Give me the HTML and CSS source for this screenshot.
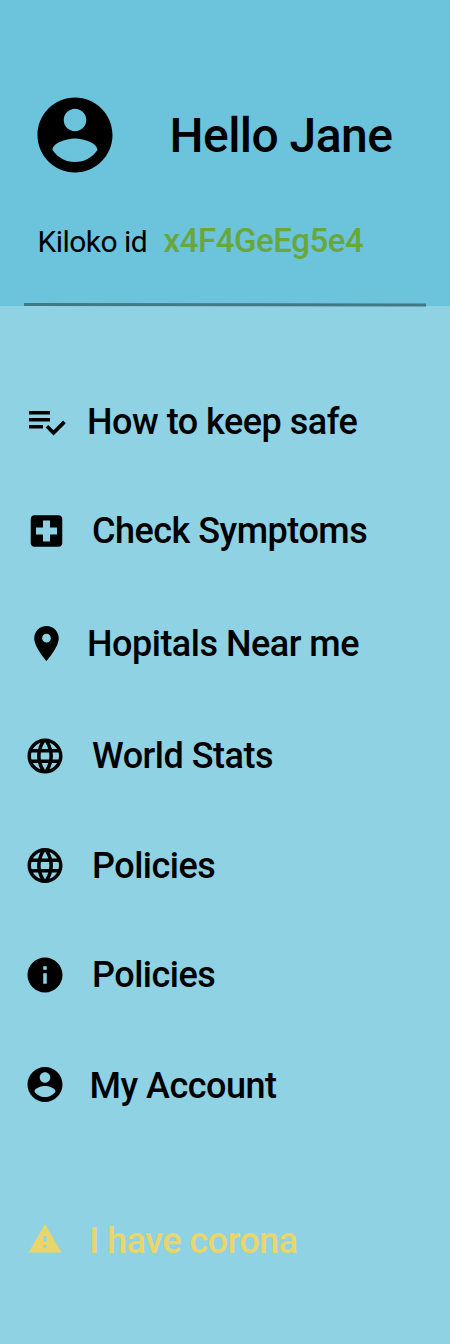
FILE: index.html
```html
<!DOCTYPE html>
<html lang="en">
<head>
<meta charset="utf-8">
<title>Menu</title>
<link rel="stylesheet" href="styles.css">
</head>
<body>
<aside class="drawer">
  <header class="profile">
    <div class="greeting">
      <svg class="avatar" viewBox="1.870 1.870 20.260 20.260"><path d="M12 2C6.480 2 2 6.480 2 12s4.480 10 10 10 10-4.480 10-10S17.520 2 12 2zm0 3c1.660 0 3 1.340 3 3s-1.340 3-3 3-3-1.340-3-3 1.340-3 3-3zm0 14.200c-2.500 0-4.710-1.280-6-3.220.030-1.990 4-3.080 6-3.080 1.990 0 5.970 1.090 6 3.080-1.290 1.940-3.500 3.220-6 3.220z"/></svg>
      <h1 class="name">Hello Jane</h1>
    </div>
    <p class="identity"><span class="label">Kiloko id</span><span class="code">x4F4GeEg5e4</span></p>
    <svg class="divider" viewBox="0 0 402 4"><path d="M0 1.500L402 2.100" stroke="#407886" stroke-width="3"/></svg>
  </header>
  <nav class="menu">
    <a class="item safe"><svg class="icon" viewBox="0.286 0.286 24 24"><path d="M14 10H2v2h12v-2zm0-4H2v2h12V6zM2 16h8v-2H2v2zm19.500-4.500L23 13l-6.990 7-4.510-4.500L13 14l3.010 3 5.490-5.500z"/></svg><span class="text">How to keep safe</span></a>
    <a class="item symptoms"><svg class="icon" viewBox="0.286 0 24 24"><path d="M19 3H5c-1.100 0-1.990.9-1.990 2L3 19c0 1.100.9 2 2 2h14c1.100 0 2-.9 2-2V5c0-1.100-.9-2-2-2zm-1 11h-4v4h-4v-4H6v-4h4V6h4v4h4v4z"/></svg><span class="text">Check Symptoms</span></a>
    <a class="item hospitals"><svg class="icon" viewBox="0.286 0.286 24 24"><path d="M12 2C8.130 2 5 5.130 5 9c0 5.250 7 13 7 13s7-7.750 7-13c0-3.870-3.130-7-7-7zm0 9.500c-1.380 0-2.500-1.120-2.500-2.500s1.120-2.500 2.500-2.500 2.500 1.120 2.500 2.500-1.120 2.500-2.500 2.500z"/></svg><span class="text">Hopitals Near me</span></a>
    <a class="item world"><svg class="icon" viewBox="0 0 24 24"><path d="M11.990 2C6.470 2 2 6.480 2 12s4.470 10 9.990 10C17.520 22 22 17.520 22 12S17.520 2 11.990 2zm6.930 6h-2.950c-.32-1.250-.78-2.450-1.380-3.560 1.840.63 3.370 1.910 4.330 3.560zM12 4.040c.83 1.200 1.480 2.530 1.910 3.960h-3.820c.43-1.430 1.080-2.760 1.910-3.960zM4.260 14C4.100 13.360 4 12.690 4 12s.1-1.360.26-2h3.380c-.08.66-.14 1.320-.14 2 0 .68.06 1.340.14 2H4.260zm.82 2h2.950c.32 1.250.78 2.450 1.380 3.560-1.840-.63-3.370-1.900-4.330-3.560zm2.950-8H5.080c.96-1.660 2.490-2.930 4.330-3.560C8.810 5.550 8.350 6.750 8.030 8zM12 19.960c-.83-1.200-1.480-2.530-1.910-3.960h3.820c-.43 1.430-1.080 2.760-1.910 3.960zM14.340 14H9.660c-.09-.66-.16-1.320-.16-2 0-.68.07-1.350.16-2h4.680c.09.65.16 1.320.16 2 0 .68-.07 1.340-.16 2zm.25 5.560c.6-1.110 1.060-2.310 1.380-3.560h2.950c-.96 1.650-2.490 2.930-4.330 3.560zM16.360 14c.08-.66.14-1.320.14-2 0-.68-.06-1.340-.14-2h3.380c.16.64.26 1.310.26 2s-.1 1.360-.26 2h-3.380z"/></svg><span class="text">World Stats</span></a>
    <a class="item policies"><svg class="icon" viewBox="0 0.286 24 24"><path d="M11.990 2C6.470 2 2 6.480 2 12s4.470 10 9.990 10C17.520 22 22 17.520 22 12S17.520 2 11.990 2zm6.930 6h-2.950c-.32-1.250-.78-2.450-1.380-3.560 1.840.63 3.370 1.910 4.330 3.560zM12 4.040c.83 1.200 1.480 2.530 1.910 3.960h-3.820c.43-1.430 1.080-2.760 1.910-3.960zM4.260 14C4.100 13.360 4 12.690 4 12s.1-1.360.26-2h3.380c-.08.66-.14 1.320-.14 2 0 .68.06 1.340.14 2H4.260zm.82 2h2.950c.32 1.250.78 2.450 1.380 3.560-1.840-.63-3.370-1.900-4.330-3.560zm2.950-8H5.080c.96-1.660 2.490-2.930 4.330-3.560C8.810 5.550 8.350 6.750 8.030 8zM12 19.960c-.83-1.200-1.480-2.530-1.910-3.960h3.820c-.43 1.430-1.080 2.760-1.910 3.960zM14.340 14H9.660c-.09-.66-.16-1.320-.16-2 0-.68.07-1.350.16-2h4.680c.09.65.16 1.320.16 2 0 .68-.07 1.340-.16 2zm.25 5.560c.6-1.110 1.060-2.310 1.380-3.560h2.950c-.96 1.650-2.490 2.930-4.330 3.560zM16.360 14c.08-.66.14-1.320.14-2 0-.68-.06-1.340-.14-2h3.380c.16.64.26 1.310.26 2s-.1 1.360-.26 2h-3.380z"/></svg><span class="text">Policies</span></a>
    <a class="item about"><svg class="icon" viewBox="0 0 24 24"><path d="M12 2C6.480 2 2 6.480 2 12s4.480 10 10 10 10-4.480 10-10S17.520 2 12 2zm1 15h-2v-6h2v6zm0-8h-2V7h2v2z"/></svg><span class="text">Policies</span></a>
    <a class="item account"><svg class="icon" viewBox="0 0.286 24 24"><path d="M12 2C6.480 2 2 6.480 2 12s4.480 10 10 10 10-4.480 10-10S17.520 2 12 2zm0 3c1.660 0 3 1.340 3 3s-1.340 3-3 3-3-1.340-3-3 1.340-3 3-3zm0 14.200c-2.500 0-4.710-1.280-6-3.220.030-1.990 4-3.080 6-3.080 1.990 0 5.970 1.090 6 3.080-1.290 1.940-3.500 3.220-6 3.220z"/></svg><span class="text">My Account</span></a>
    <a class="item alert"><svg class="icon" viewBox="0 0 24 24"><path d="M1 21h22L12 2 1 21zm12-3h-2v-2h2v2zm0-4h-2v-4h2v4z"/></svg><span class="text">I have corona</span></a>
  </nav>
</aside>
</body>
</html>
```
FILE: styles.css
```css
* { box-sizing: border-box; }
body { margin: 0; font-family: Roboto, "Liberation Sans", sans-serif; color: #000; }
.drawer { width: 450px; height: 1344px; background: #8fd2e3; overflow: hidden; }
.profile { height: 306px; padding: 97px 24px 0; background: #6bc3dc; }
.greeting { display: flex; align-items: center; height: 76px; padding-left: 13px; }
.avatar { width: 76px; height: 76px; flex: none; }
.name { margin: 1px 0 0 56.500px; font-size: 48px; line-height: 56px; font-weight: 500; white-space: nowrap; letter-spacing: -0.55px; }
.identity { display: flex; align-items: baseline; height: 40px; margin: 48px 0 0; padding-left: 13.500px; line-height: 40px; white-space: nowrap; }
.label { width: 126px; font-size: 30px; letter-spacing: -0.55px; }
.code { color: #69a73b; font-size: 33px; font-weight: 500; letter-spacing: -0.45px; }
.divider { display: block; width: 402px; height: 4px; margin-top: 42px; overflow: visible; }
.menu { padding: 95px 24px 0; }
.item { display: flex; align-items: flex-start; height: 42px; }
.icon { width: 42px; height: 42px; flex: none; }
.text { margin-left: 26px; font-size: 36px; line-height: 42px; font-weight: 500; letter-spacing: -0.5px; white-space: nowrap; }
.safe .icon, .hospitals .icon { margin-left: 2px; }
.safe .text, .hospitals .text { margin-left: 19px; }
.symptoms { margin-top: 67px; }
.symptoms .icon { margin-left: 2px; }
.symptoms .text { margin-left: 24px; }
.hospitals { margin-top: 71px; }
.hospitals .icon { margin-top: 0; }
.world { margin-top: 70px; }
.policies { margin-top: 68px; }
.about { margin-top: 67px; }
.account { margin-top: 69px; }
.account .icon { margin-top: -1px; }
.account .text { margin-left: 23.500px; }
.alert { margin-top: 113px; color: #ead56b; fill: #ead56b; }
.alert .icon { width: 36px; height: 36px; margin: 1px 0 0 3px; }
.alert .text { margin-left: 26px; letter-spacing: -0.55px; }
```
